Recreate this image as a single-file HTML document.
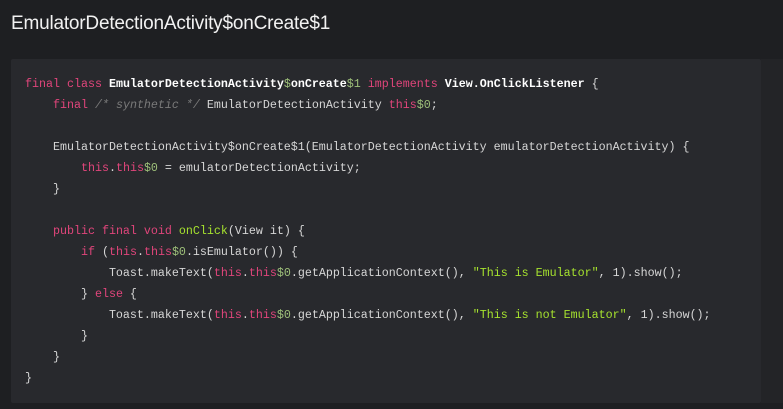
<!DOCTYPE html>
<html><head><style>
html,body{margin:0;padding:0;background:#1e1f22;width:783px;height:409px;overflow:hidden}
h1{position:absolute;left:11px;top:13px;margin:0;font:500 19px "Liberation Sans",sans-serif;color:#f2f2f2;letter-spacing:-0.2px}
.box{position:absolute;left:11px;top:59px;width:750px;height:344px;background:#28292d;border-radius:2px}
.side{position:absolute;left:761px;top:59px;width:22px;height:344px;background:#232427}
pre{position:absolute;left:25px;top:74px;margin:0;font:11.67px/21px "Liberation Mono",monospace;color:#d6d6d6}
.k{color:#e0457b}.b{color:#fff;font-weight:bold}.g{color:#a6e22e}.c{color:#7a7a7a;font-style:italic}.n{color:#9ec07a}
</style></head><body>
<h1>EmulatorDetectionActivity$onCreate$1</h1>
<div class="side"></div>
<div class="box"></div>
<pre><span class="k">final class</span> <span class="b">EmulatorDetectionActivity</span><span class="n">$</span><span class="b">onCreate</span><span class="n">$1</span> <span class="k">implements</span> <span class="b">View.OnClickListener</span> {
    <span class="k">final</span> <span class="c">/* synthetic */</span> EmulatorDetectionActivity <span class="k">this</span><span class="n">$0</span>;

    EmulatorDetectionActivity$onCreate$1(EmulatorDetectionActivity emulatorDetectionActivity) {
        <span class="k">this</span>.<span class="k">this</span><span class="n">$0</span> = emulatorDetectionActivity;
    }

    <span class="k">public final void</span> <span class="g">onClick</span>(View it) {
        <span class="k">if</span> (<span class="k">this</span>.<span class="k">this</span><span class="n">$0</span>.isEmulator()) {
            Toast.makeText(<span class="k">this</span>.<span class="k">this</span><span class="n">$0</span>.getApplicationContext(), <span class="g">"This is Emulator"</span>, 1).show();
        } <span class="k">else</span> {
            Toast.makeText(<span class="k">this</span>.<span class="k">this</span><span class="n">$0</span>.getApplicationContext(), <span class="g">"This is not Emulator"</span>, 1).show();
        }
    }
}</pre>
</body></html>
